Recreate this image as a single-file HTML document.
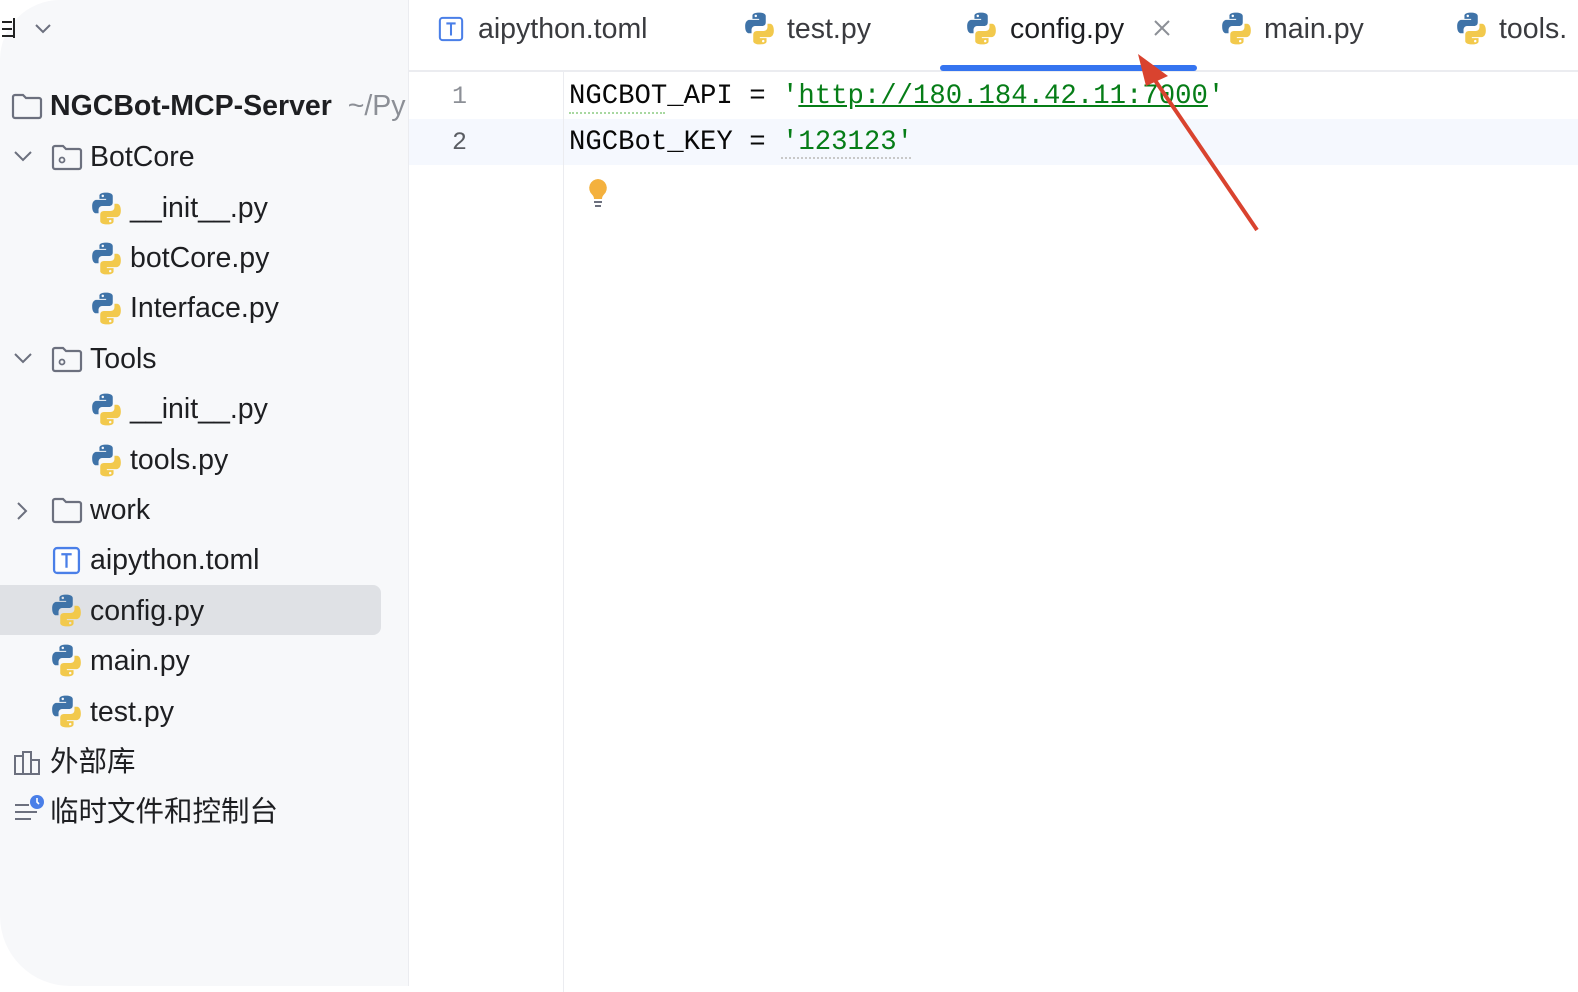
<!DOCTYPE html>
<html><head><meta charset="utf-8"><style>
html,body{margin:0;padding:0;background:#fff;width:1578px;height:992px;overflow:hidden;font-family:"Liberation Sans","Noto Sans CJK SC",sans-serif;}
.side{position:absolute;left:0;top:0;width:408px;height:986px;background:#f7f8fa;border-right:1px solid #ebecf0;border-radius:60px 0 0 70px;}
.r{position:absolute;font-size:28.5px;color:#1e1f22;line-height:50px;height:50px;white-space:nowrap;}
.ic{position:absolute;}
.tab{position:absolute;top:8px;font-size:28.5px;color:#3a3b3f;line-height:42px;white-space:nowrap;}
.code{position:absolute;font-family:"Liberation Mono",monospace;font-size:27.3px;color:#080808;line-height:46px;white-space:pre;}
.ln{position:absolute;font-family:"Liberation Mono",monospace;font-size:25px;color:#8c8f96;line-height:46px;}
</style></head><body>
<svg width="0" height="0" style="position:absolute">
<defs>
<symbol id="py" viewBox="2.5 1.5 27 29">
<path d="M15.6 2c-6.2 0-5.8 2.7-5.8 2.7v2.8h5.9v.9H7.4S3.4 8 3.4 14.2s3.5 6 3.5 6h2.1v-2.9s-.1-3.5 3.4-3.5h5.8s3.3.1 3.3-3.2V5.2S22 2 15.6 2zm-3.2 1.9a1.1 1.1 0 110 2.1 1.1 1.1 0 010-2.1z" fill="#3f73a8"/>
<path d="M16.4 30c6.2 0 5.8-2.7 5.8-2.7v-2.8h-5.9v-.9h8.3s4 .4 4-5.8-3.5-6-3.5-6H23v2.9s.1 3.5-3.4 3.5h-5.8s-3.3-.1-3.3 3.2v5.4S10 30 16.4 30zm3.2-1.9a1.1 1.1 0 110-2.1 1.1 1.1 0 010 2.1z" fill="#f2c94c"/>
</symbol>
<symbol id="fold" viewBox="0 0 32 28"><path d="M2 5a2 2 0 012-2h8l3 3h13a2 2 0 012 2v16a2 2 0 01-2 2H4a2 2 0 01-2-2z" fill="none" stroke="#6c707e" stroke-width="2.2"/></symbol>
<symbol id="foldp" viewBox="0 0 32 28"><path d="M2 5a2 2 0 012-2h8l3 3h13a2 2 0 012 2v16a2 2 0 01-2 2H4a2 2 0 01-2-2z" fill="none" stroke="#6c707e" stroke-width="2.2"/><circle cx="11" cy="17" r="2.5" fill="none" stroke="#6c707e" stroke-width="1.8"/></symbol>
<symbol id="toml" viewBox="0 0 28 28"><rect x="2" y="2" width="24" height="24" rx="3" fill="#fff" stroke="#4a7fe8" stroke-width="2.2"/><path d="M9 8h10M14 8v13" stroke="#4a7fe8" stroke-width="2.2" fill="none"/></symbol>
</defs></svg>

<div class="side"></div>
<div style="position:absolute;left:2px;top:18px;width:14px;height:24px;">
<div style="position:absolute;left:0;top:3px;width:10px;height:2px;background:#222"></div>
<div style="position:absolute;left:0;top:10px;width:10px;height:2px;background:#222"></div>
<div style="position:absolute;left:0;top:17px;width:12px;height:2px;background:#222"></div>
<div style="position:absolute;left:11px;top:0;width:2px;height:20px;background:#222"></div>
</div>
<svg style="position:absolute;left:34px;top:22px" width="18" height="14"><path d="M2 3l7 7 7-7" fill="none" stroke="#6c707e" stroke-width="2"/></svg>

<svg class="ic" style="left:11px;top:92px" width="32" height="28"><use href="#fold"/></svg>
<div class="r" style="left:50px;top:81px"><b>NGCBot-MCP-Server</b><span style="color:#8c8f96">&nbsp;&nbsp;~/Py</span></div>

<svg class="ic" style="left:12px;top:148px" width="22" height="16"><path d="M3 4l8 8 8-8" fill="none" stroke="#6c707e" stroke-width="2"/></svg>
<svg class="ic" style="left:51px;top:143px" width="32" height="28"><use href="#foldp"/></svg>
<div class="r" style="left:90px;top:132px">BotCore</div>

<svg class="ic" style="left:91px;top:192px" width="31" height="33"><use href="#py"/></svg>
<div class="r" style="left:130px;top:183px">__init__.py</div>
<svg class="ic" style="left:91px;top:242px" width="31" height="33"><use href="#py"/></svg>
<div class="r" style="left:130px;top:233px">botCore.py</div>
<svg class="ic" style="left:91px;top:292px" width="31" height="33"><use href="#py"/></svg>
<div class="r" style="left:130px;top:283px">Interface.py</div>

<svg class="ic" style="left:12px;top:350px" width="22" height="16"><path d="M3 4l8 8 8-8" fill="none" stroke="#6c707e" stroke-width="2"/></svg>
<svg class="ic" style="left:51px;top:345px" width="32" height="28"><use href="#foldp"/></svg>
<div class="r" style="left:90px;top:334px">Tools</div>

<svg class="ic" style="left:91px;top:393px" width="31" height="33"><use href="#py"/></svg>
<div class="r" style="left:130px;top:384px">__init__.py</div>
<svg class="ic" style="left:91px;top:444px" width="31" height="33"><use href="#py"/></svg>
<div class="r" style="left:130px;top:435px">tools.py</div>

<svg class="ic" style="left:14px;top:500px" width="16" height="22"><path d="M4 3l8 8-8 8" fill="none" stroke="#6c707e" stroke-width="2"/></svg>
<svg class="ic" style="left:51px;top:496px" width="32" height="28"><use href="#fold"/></svg>
<div class="r" style="left:90px;top:485px">work</div>

<svg class="ic" style="left:52px;top:546px" width="29" height="29"><use href="#toml"/></svg>
<div class="r" style="left:90px;top:535px">aipython.toml</div>

<div style="position:absolute;left:0;top:585px;width:381px;height:50px;background:#dfe1e5;border-radius:0 8px 8px 0"></div>
<svg class="ic" style="left:51px;top:594px" width="31" height="33"><use href="#py"/></svg>
<div class="r" style="left:90px;top:586px">config.py</div>
<svg class="ic" style="left:51px;top:644px" width="31" height="33"><use href="#py"/></svg>
<div class="r" style="left:90px;top:636px">main.py</div>
<svg class="ic" style="left:51px;top:695px" width="31" height="33"><use href="#py"/></svg>
<div class="r" style="left:90px;top:687px">test.py</div>

<svg class="ic" style="left:13px;top:750px" width="30" height="26"><path d="M2 6h8v18H2zM10 2h8v22h-8zM18 10h8v14h-8z" fill="none" stroke="#6c707e" stroke-width="2"/></svg>
<div class="r" style="left:50px;top:737px">外部库</div>
<svg class="ic" style="left:13px;top:794px" width="32" height="30"><path d="M2 11h14M2 18h22M2 25h16" stroke="#6c707e" stroke-width="2"/><circle cx="24" cy="8" r="7" fill="#4a7fe8"/><path d="M24 4v4l2 2" stroke="#fff" stroke-width="1.6" fill="none"/></svg>
<div class="r" style="left:50px;top:787px">临时文件和控制台</div>

<div style="position:absolute;left:409px;top:70px;width:1169px;height:2px;background:#ebecf0"></div>
<svg class="ic" style="left:438px;top:16px" width="26" height="26"><use href="#toml"/></svg>
<div class="tab" style="left:478px">aipython.toml</div>
<svg class="ic" style="left:744px;top:12px" width="31" height="33"><use href="#py"/></svg>
<div class="tab" style="left:787px">test.py</div>
<svg class="ic" style="left:966px;top:12px" width="31" height="33"><use href="#py"/></svg>
<div class="tab" style="left:1010px;color:#1e1f22">config.py</div>
<svg class="ic" style="left:1153px;top:19px" width="18" height="18"><path d="M2 2l14 14M16 2L2 16" stroke="#8c8f96" stroke-width="2"/></svg>
<div style="position:absolute;left:940px;top:65px;width:257px;height:6px;background:#3574f0;border-radius:3px"></div>
<svg class="ic" style="left:1221px;top:12px" width="31" height="33"><use href="#py"/></svg>
<div class="tab" style="left:1264px">main.py</div>
<svg class="ic" style="left:1456px;top:12px" width="31" height="33"><use href="#py"/></svg>
<div class="tab" style="left:1499px">tools.</div>

<div style="position:absolute;left:409px;top:119px;width:1169px;height:46px;background:#f5f8fe"></div>
<div style="position:absolute;left:563px;top:72px;width:1px;height:920px;background:#ebecf0"></div>
<div class="ln" style="left:452px;top:74px">1</div>
<div class="ln" style="left:452px;top:120px;color:#5a5d63">2</div>
<div class="code" style="left:569px;top:74px">NGCBOT_API = <span style="color:#067d17">'<u>http://180.184.42.11:7000</u>'</span></div>
<div class="code" style="left:569px;top:120px">NGCBot_KEY = <span style="color:#067d17">'123123'</span></div>
<div style="position:absolute;left:569px;top:112px;width:96px;border-bottom:2px dotted #a8d8a0"></div>
<div style="position:absolute;left:781px;top:157px;width:130px;border-bottom:2px dotted #c8c8c8"></div>
<svg class="ic" style="left:586px;top:177px" width="24" height="34"><path d="M12 2a9 9 0 00-6 15.5c1.5 1.5 2 3 2 4.5h8c0-1.5.5-3 2-4.5A9 9 0 0012 2z" fill="#f4b13e"/><path d="M8 25h8M9 29h6" stroke="#6c707e" stroke-width="2"/></svg>

<svg style="position:absolute;left:1130px;top:50px" width="140" height="190"><path d="M127 180L18 20" stroke="#d9432f" stroke-width="4"/><path d="M8 4l30 22-22 10z" fill="#d9432f"/></svg>
</body></html>
